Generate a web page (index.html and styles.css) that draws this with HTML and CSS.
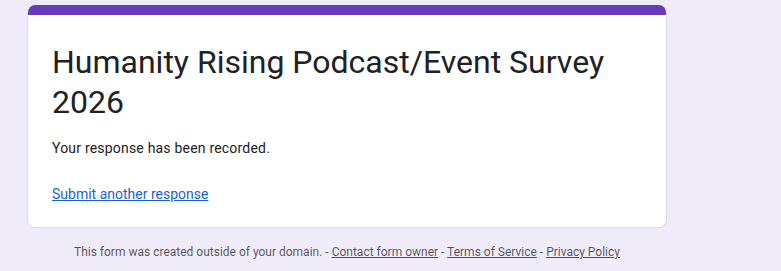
FILE: index.html
```html
<!DOCTYPE html>
<html lang="en">
<head>
<meta charset="utf-8">
<title>Humanity Rising Podcast/Event Survey 2026</title>
<link rel="stylesheet" href="styles.css">
</head>
<body>
<div class="page">
  <div class="card">
    <div class="card-bar"></div>
    <div class="card-body">
      <h1 class="title">Humanity Rising Podcast/Event Survey 2026</h1>
      <p class="message">Your response has been recorded.</p>
      <a class="again" href="#">Submit another response</a>
    </div>
  </div>
  <div class="footer">This form was created outside of your domain. - <a href="#">Contact form owner</a> - <a href="#">Terms of Service</a> - <a href="#">Privacy Policy</a></div>
</div>
</body>
</html>
```
FILE: styles.css
```css
html, body {
  margin: 0;
  padding: 0;
  background: #f0ebf8;
  font-family: Roboto, "Liberation Sans", Arial, sans-serif;
  color: #202124;
}
.page {
  width: 640px;
  margin-left: 27px;
  padding-top: 5px;
}
.card {
  background: #fff;
  border: 1px solid #dadce0;
  border-top: none;
  border-radius: 8px;
  overflow: hidden;
}
.card-bar {
  height: 10px;
  background: #673ab7;
  margin: 0 -1px;
}
.card-body {
  padding: 27px 24px 23px;
}
.title {
  margin: 0;
  font-weight: 400;
  font-size: 32px;
  line-height: 40px;
  color: #202124;
}
.message {
  margin: 16px 0 0;
  font-size: 14px;
  line-height: 20px;
  letter-spacing: 0.2px;
  color: #202124;
}
.again {
  display: inline-block;
  margin-top: 26px;
  font-size: 14px;
  line-height: 20px;
  color: #1a5fd6;
}
.footer {
  margin-top: 16px;
  text-align: center;
  font-size: 12px;
  line-height: 16px;
  color: rgba(0,0,0,0.66);
}
.footer a {
  color: rgba(0,0,0,0.66);
}
```
